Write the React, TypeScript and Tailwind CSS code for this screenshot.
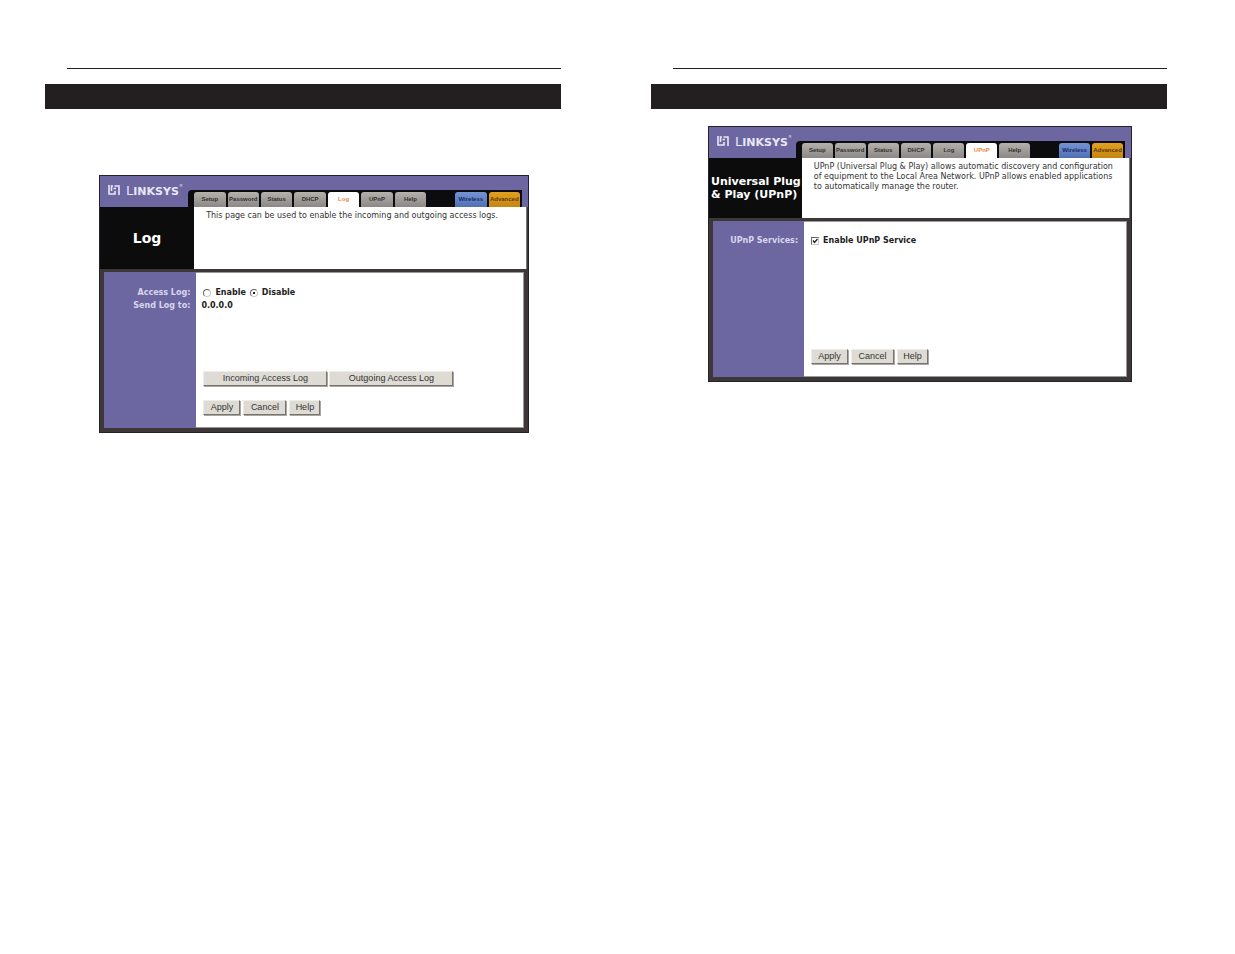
import React from "react";

type Section = "Log" | "UPnP";

interface PanelProps {
  active: Section;
  title: React.ReactNode;
  description: string;
  sidebar: React.ReactNode;
  children: React.ReactNode;
}

const tabs = ["Setup", "Password", "Status", "DHCP", "Log", "UPnP", "Help"];

const Logo = () => (
  <div className="flex h-7 items-center gap-1.5 pl-2 text-[#e9e6f6]">
    <svg
      width="12"
      height="10"
      viewBox="0 0 12 10"
      fill="none"
      stroke="currentColor"
      strokeWidth="1.6"
      aria-hidden="true"
    >
      <path d="M1 0v9h6V6M3.5 6V1H5M6.5 1H11v9M8 3.5H5.5" />
    </svg>
    <span className="flex items-baseline font-['DejaVu_Sans',sans-serif] leading-none">
      <span className="text-[13px]">L</span>
      <span className="text-[11px] font-bold">INKSYS</span>
      <span className="self-start text-[4px]">®</span>
    </span>
  </div>
);

interface TabProps {
  label: string;
  className: string;
}

const Tab = ({ label, className }: TabProps) => (
  <a
    href="#"
    className={`flex min-w-0 flex-1 items-center justify-center rounded-t-[3px] font-['Liberation_Sans',sans-serif] text-[6px] font-bold ${className}`}
  >
    {label}
  </a>
);

const PanelButton = ({ label, className }: TabProps) => (
  <button
    type="button"
    className={`h-[15px] border border-[#eeece8] border-r-[#77736f] border-b-[#77736f] bg-[#dedbd5] font-['Liberation_Sans',sans-serif] text-[9px] leading-none font-normal text-[#333] shadow-[1px_1px_0_#aaa6a0] ${className}`}
  >
    {label}
  </button>
);

const FormButtons = () => (
  <div className="flex gap-[3px]">
    <PanelButton label="Apply" className="w-[37px]" />
    <PanelButton label="Cancel" className="w-[43px]" />
    <PanelButton label="Help" className="w-[31px]" />
  </div>
);

const Panel = ({ active, title, description, sidebar, children }: PanelProps) => (
  <section className="border border-[#25222f] bg-[#3d3837] font-['DejaVu_Sans',sans-serif]">
    <header className="grid grid-cols-[22%_1fr] bg-[#6c66a1]">
      <Logo />
      <div className="pt-3.5 pr-1.5">
        <nav className="-ml-1.5 flex h-[17px] gap-0.5 rounded-tl-sm bg-[#0c0c0e] pt-0.5 pr-0.5 pl-1.5">
          {tabs.map((tab) => (
            <Tab
              key={tab}
              label={tab}
              className={
                tab === active
                  ? "bg-white text-[#ee8440]"
                  : "bg-linear-to-b from-[#b5b2ae] to-[#8b8885] text-[#34302f]"
              }
            />
          ))}
          <div className="w-[25px]" />
          <Tab
            label="Wireless"
            className="bg-linear-to-b from-[#7692d4] to-[#5070b4] text-[#192b60]"
          />
          <Tab
            label="Advanced"
            className="bg-linear-to-b from-[#e2a020] to-[#c58610] text-[#60380b]"
          />
        </nav>
      </div>
    </header>
    <div
      className={`grid grid-cols-[22%_1fr] ${
        active === "Log" ? "min-h-[62px]" : "min-h-[60px]"
      }`}
    >
      <h2
        className={`flex items-center bg-[#0c0c0c] font-bold text-white ${
          active === "Log"
            ? "justify-center text-[14px]"
            : "pl-0.5 text-[11px] leading-[13px] whitespace-nowrap"
        }`}
      >
        {title}
      </h2>
      <p className="mr-px border-r border-[#777] bg-white pt-1 pr-4 pl-3 text-[8px] leading-[10px] text-[#333]">
        {description}
      </p>
    </div>
    <form
      className="grid min-h-[163px] grid-cols-[22%_1fr] border-4 border-t-[3px] border-[#3d3837] bg-white text-[8px] font-bold"
      onSubmit={(e) => e.preventDefault()}
    >
      <div className="bg-[#6c66a1] pr-1.5 text-right leading-[13px] text-[#d9d6ed]">
        {sidebar}
      </div>
      <div className="flex flex-col justify-between border-t border-r border-b border-[#999] pl-[7px] text-[#222]">
        {children}
      </div>
    </form>
  </section>
);

const Radio = ({ label, checked }: { label: string; checked?: boolean }) => (
  <label className="flex items-center gap-1">
    <input
      type="radio"
      name="access-log"
      defaultChecked={checked}
      className="size-2 appearance-none rounded-full border border-[#ccc] border-t-[#666] border-l-[#666] bg-white bg-radial from-white from-30% to-white checked:from-[#222] checked:to-30%"
    />
    {label}
  </label>
);

const ManualPage = ({ children }: { children: React.ReactNode }) => (
  <article className="min-w-0">
    <hr className="ml-[22px] border-[#231f20]" />
    <div className="mt-[15px] h-[25px] bg-[#231f20]" />
    {children}
  </article>
);

const App: React.FC = () => {
  return (
    <main className="grid min-h-screen grid-cols-2 gap-[90px] bg-white pt-[68px] pr-[68px] pl-[45px]">
      <ManualPage>
        <div className="mt-[66px] mr-8 ml-[54px]">
          <Panel
            active="Log"
            title="Log"
            description="This page can be used to enable the incoming and outgoing access logs."
            sidebar={
              <div className="pt-3.5">
                <p>Access Log:</p>
                <p>Send Log to:</p>
              </div>
            }
          >
            <div className="pt-[13px] leading-[13px]">
              <div className="flex gap-1">
                <Radio label="Enable" />
                <Radio label="Disable" checked />
              </div>
              <p className="-ml-0.5">0.0.0.0</p>
            </div>
            <div className="flex flex-col gap-3.5 pb-3">
              <div className="flex gap-0.5">
                <PanelButton label="Incoming Access Log" className="w-[124px]" />
                <PanelButton label="Outgoing Access Log" className="w-[124px]" />
              </div>
              <FormButtons />
            </div>
          </Panel>
        </div>
      </ManualPage>

      <ManualPage>
        <div className="mt-[17px] mr-[35px] ml-[57px]">
          <Panel
            active="UPnP"
            title={
              <span>
                Universal Plug
                <br />
                &amp; Play (UPnP)
              </span>
            }
            description="UPnP (Universal Plug & Play) allows automatic discovery and configuration of equipment to the Local Area Network. UPnP allows enabled applications to automatically manage the router."
            sidebar={<p className="pt-[13px]">UPnP Services:</p>}
          >
            <label className="flex items-center gap-1 pt-3 leading-[13px]">
              <input
                type="checkbox"
                defaultChecked
                className="peer size-2 appearance-none border border-[#ccc] border-t-[#666] border-l-[#666] bg-white"
              />
              <svg
                className="-ml-3 hidden size-2 peer-checked:block"
                viewBox="0 0 8 8"
                fill="none"
                stroke="#222"
                strokeWidth="1.3"
                aria-hidden="true"
              >
                <path d="M2 3.5 3.5 5.5 6.5 2" />
              </svg>
              Enable UPnP Service
            </label>
            <div className="pb-3">
              <FormButtons />
            </div>
          </Panel>
        </div>
      </ManualPage>
    </main>
  );
};

export default App;
